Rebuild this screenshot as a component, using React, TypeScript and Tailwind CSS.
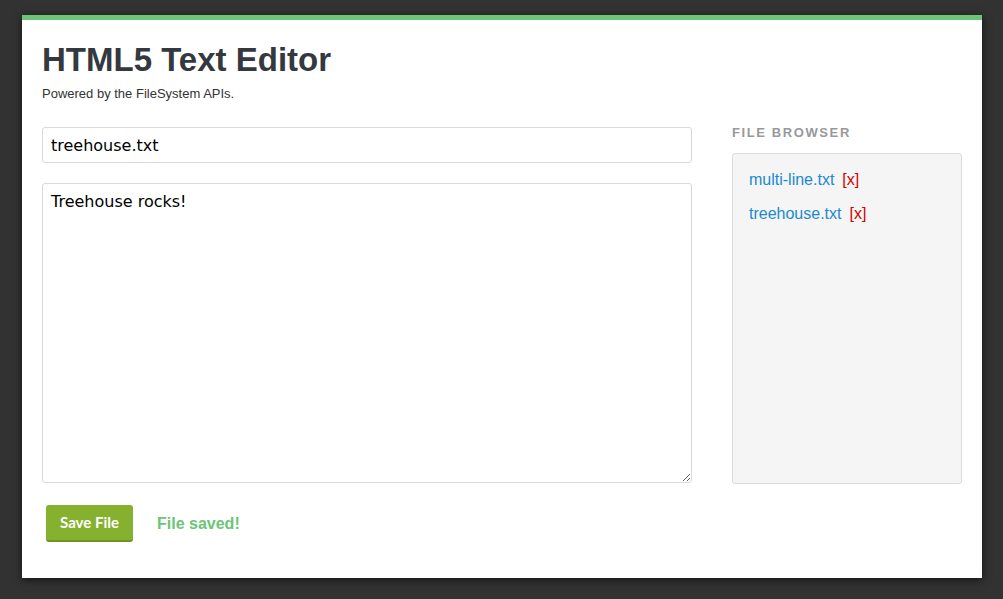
// HTML5 Text Editor — single card with editor column and file browser sidebar.

import { useState } from 'react'

type FileEntry = { name: string }

const FILES: FileEntry[] = [{ name: 'multi-line.txt' }, { name: 'treehouse.txt' }]

export default function App() {
  const [filename, setFilename] = useState('treehouse.txt')
  const [content, setContent] = useState('Treehouse rocks!')

  return (
    <div className="min-h-[599px] bg-[#323232] pt-[15px] pl-[22px] font-['Liberation_Sans',Arial,sans-serif]">
      <div className="w-[960px] h-[563px] bg-white border-t-[5px] border-[#6cc576] shadow-[0_2px_8px_rgba(0,0,0,0.6)] px-5">
        {/* Header */}
        <h1 className="mt-[20px] text-[33px] leading-[40px] font-bold text-[#33393e]">HTML5 Text Editor</h1>
        <p className="mt-[6px] text-[13px] leading-[16px] text-[#333]">Powered by the FileSystem APIs.</p>

        <div className="mt-[25px] flex gap-10">
          {/* Editor */}
          <div className="w-[650px]">
            <input
              type="text"
              value={filename}
              onChange={(e) => setFilename(e.target.value)}
              className="block w-full h-[36px] px-[8px] border border-[#d9d9d9] rounded-[3px] text-[16px] text-black font-['DejaVu_Sans',sans-serif] outline-none"
            />
            <textarea
              value={content}
              onChange={(e) => setContent(e.target.value)}
              className="block mt-[20px] w-full h-[300px] px-[8px] py-[7px] border border-[#d9d9d9] rounded-[3px] text-[16px] leading-[22px] text-black font-['DejaVu_Sans',sans-serif] outline-none resize-y"
            />
            <div className="mt-[22px] flex items-center">
              <button className="ml-1 w-[87px] h-[37px] rounded-[3px] bg-[#86b12f] border-b-2 border-[#6e9426] text-white text-[15px] font-bold font-['Lato',sans-serif]">
                Save File
              </button>
              <span className="ml-6 text-[16px] font-bold text-[#6cc576]">File saved!</span>
            </div>
          </div>

          {/* File browser */}
          <div className="w-[230px] -mt-[2px]">
            <h2 className="text-[13px] leading-[16px] font-bold tracking-[1.6px] text-[#999] uppercase">File Browser</h2>
            <div className="mt-[12px] h-[331px] bg-[#f5f5f5] border border-[#dcdcdc] rounded-[3px] px-4 pt-[16px]">
              <ul className="space-y-[14px]">
                {FILES.map((f) => (
                  <li key={f.name} className="text-[16px] leading-[20px]">
                    <a href="#" className="text-[#1a8ad0]">{f.name}</a>
                    <a href="#" className="ml-2 text-[#d10000]">[x]</a>
                  </li>
                ))}
              </ul>
            </div>
          </div>
        </div>
      </div>
    </div>
  )
}
